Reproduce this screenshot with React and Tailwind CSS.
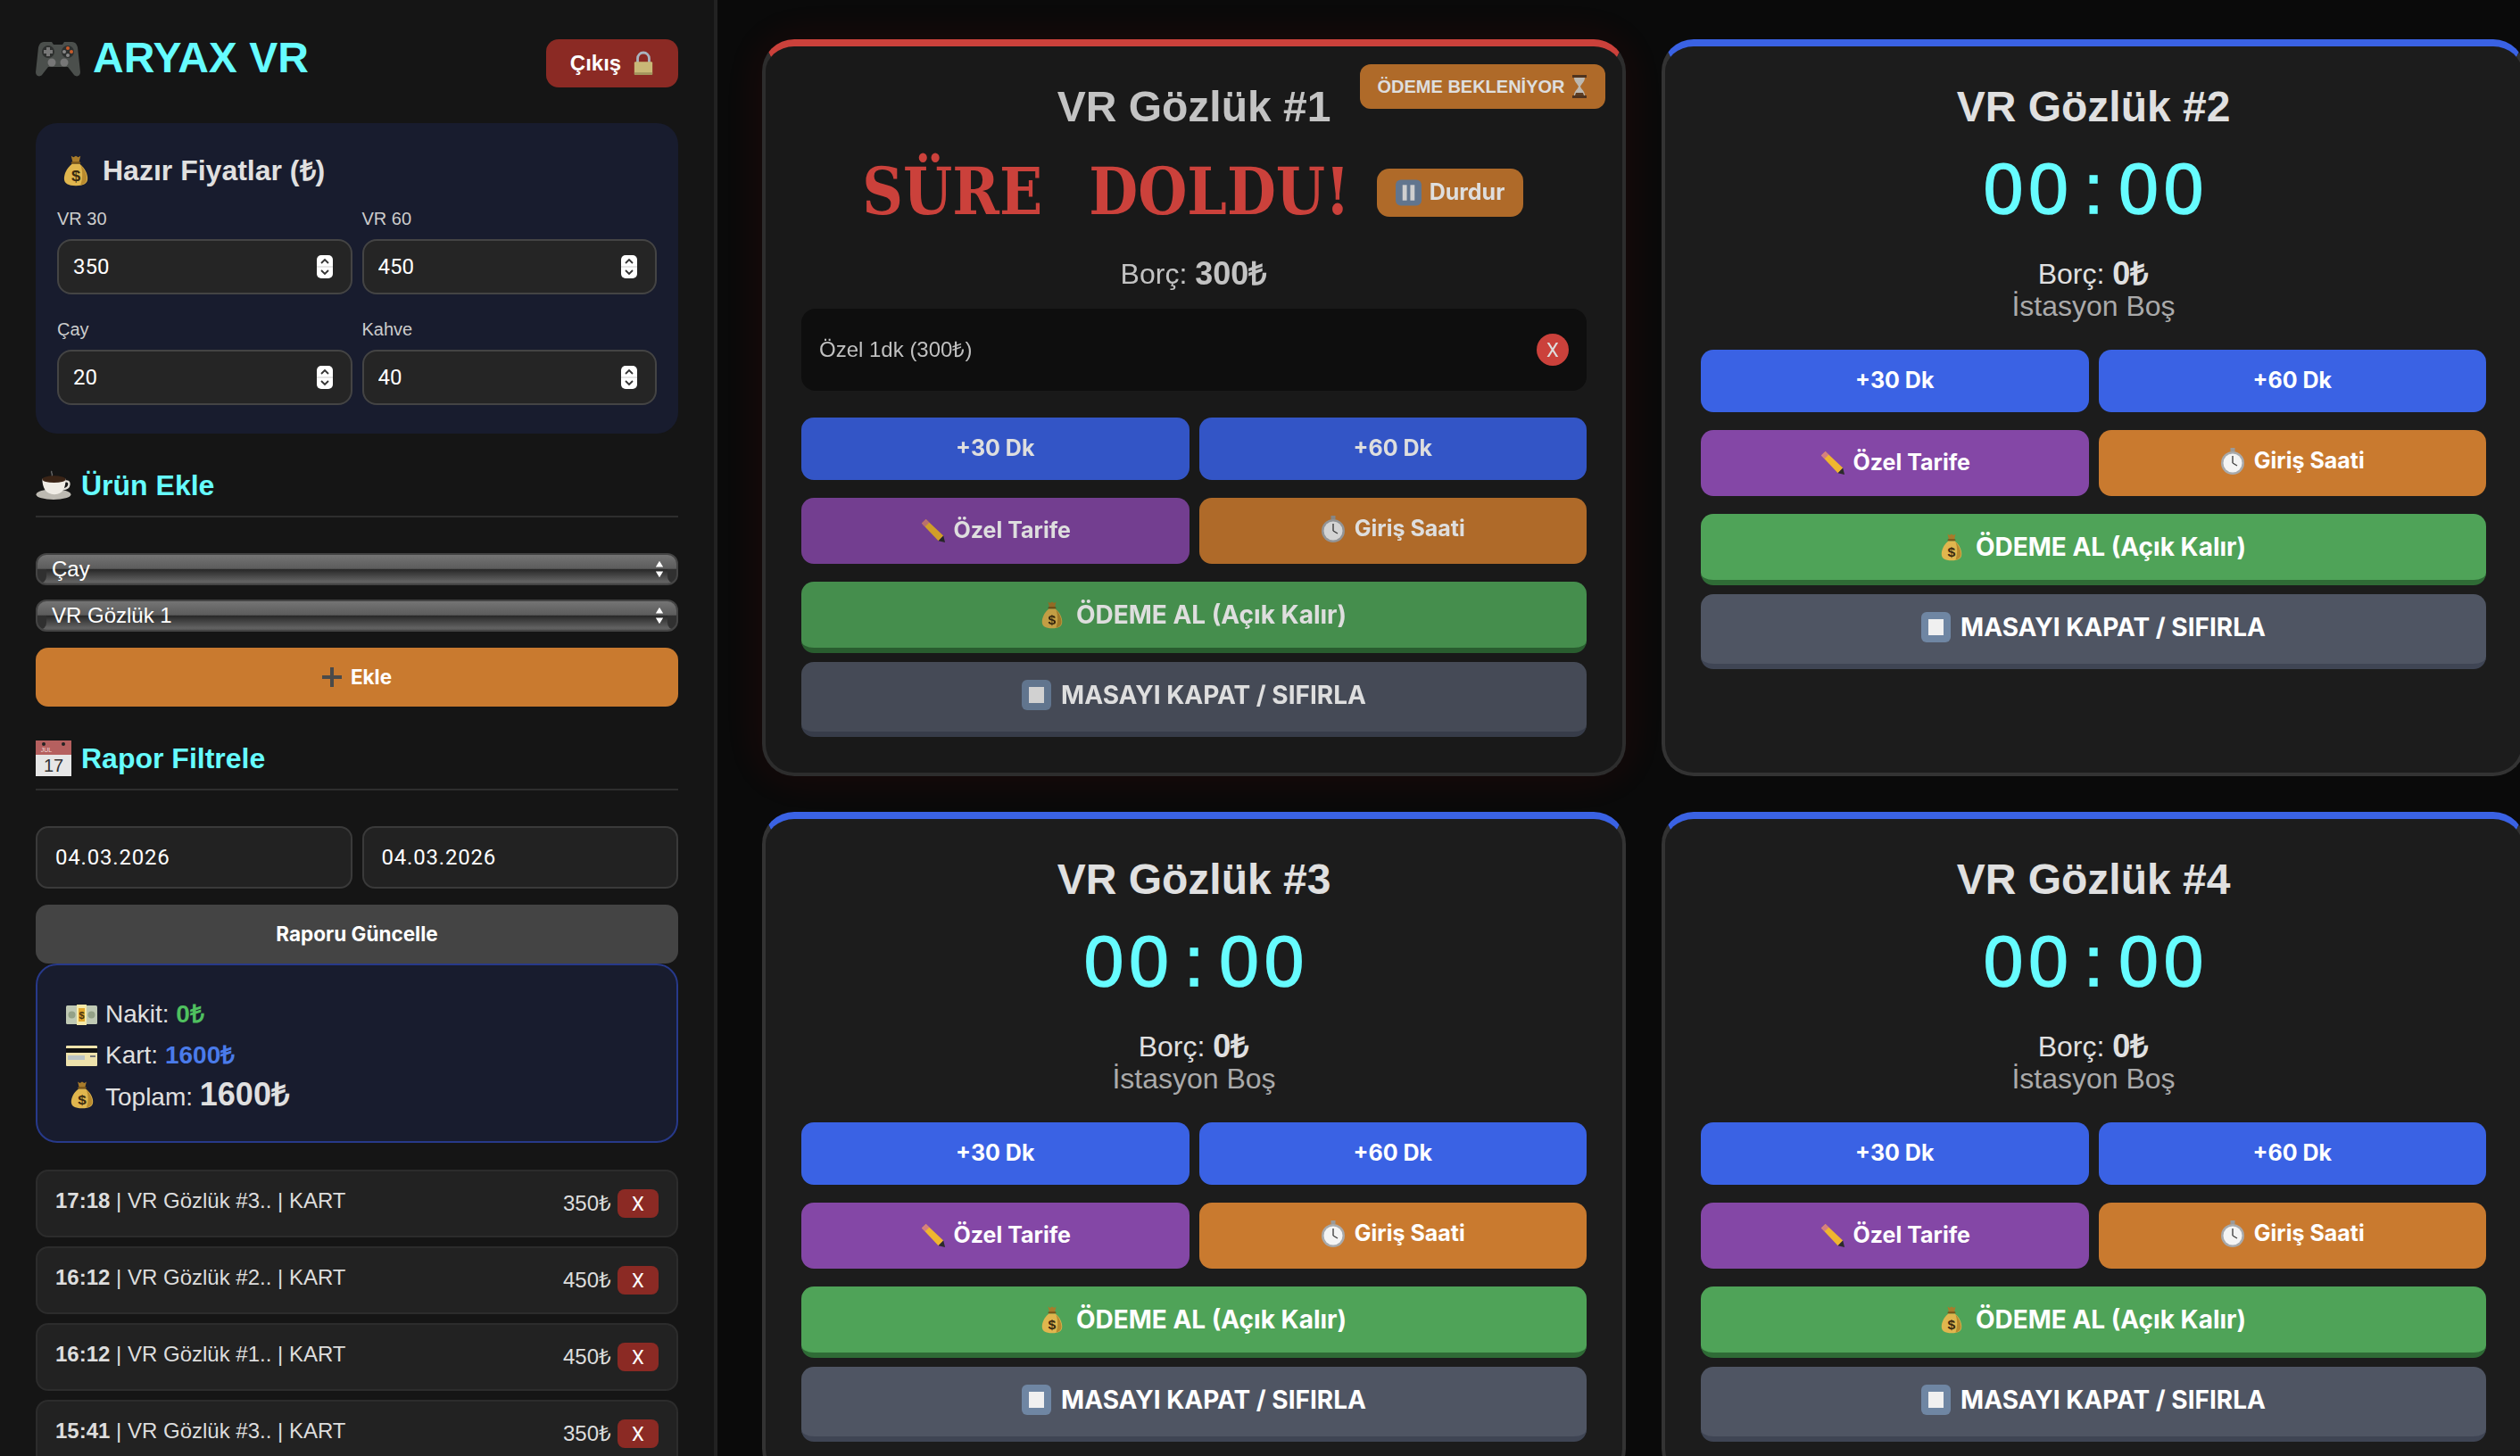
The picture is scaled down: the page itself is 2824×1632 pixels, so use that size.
import { useState } from "react";

const Bag = ({ className }) => (
  <svg viewBox="0 0 32 44" preserveAspectRatio="none" className={className}>
    <path d="M10 2l3 2 3-2 3 2 3-2-2 9h-8z" fill="#a87b2a" />
    <rect x="10" y="10" width="12" height="3" rx="1.5" fill="#7a5518" />
    <path d="M11 13C4 19 1 27 1 33c0 7 5 10 15 10s15-3 15-10c0-6-3-14-10-20z" fill="#e0b64e" />
    <path d="M22 14c5 6 8 13 8 19 0 5-3 8-8 9 3-9 3-19 0-28z" fill="#b88a2e" />
    <text x="16" y="37" textAnchor="middle" fontSize="21" fontWeight="700" fontFamily="Liberation Sans" fill="#3a2a10">$</text>
  </svg>
);

const Gamepad = ({ className }) => (
  <svg viewBox="0 0 50 44" className={className}>
    <path d="M9 4h9l2 3h10l2-3h9c3 0 5 2 6 6l3 28c0 4-4 6-7 3l-7-9H14l-7 9c-3 3-7 1-7-3l3-28c1-4 3-6 6-6z" fill="#4b4f4c" />
    <circle cx="14" cy="15" r="7" fill="#2e302f" />
    <path d="M12 10h4v3h3v4h-3v3h-4v-3H9v-4h3z" fill="#777" />
    <circle cx="36" cy="15" r="7" fill="#2e302f" />
    <circle cx="36" cy="11" r="2" fill="#c85a2a" />
    <circle cx="40" cy="15" r="2" fill="#c85a2a" />
    <circle cx="32" cy="15" r="2" fill="#888" />
    <circle cx="36" cy="19" r="2" fill="#888" />
    <circle cx="18" cy="27" r="4.5" fill="#777" />
    <circle cx="32" cy="27" r="4.5" fill="#777" />
  </svg>
);

const Lock = ({ className }) => (
  <svg viewBox="0 0 26 30" className={className}>
    <path d="M6 14V9a7 7 0 0114 0v5" fill="none" stroke="#a9b4c0" strokeWidth="3" />
    <rect x="2" y="13" width="22" height="16" rx="1.5" fill="#c9b877" />
    <rect x="2" y="26" width="22" height="3" fill="#a3945c" />
  </svg>
);

const Coffee = ({ className }) => (
  <svg viewBox="0 0 40 34" className={className}>
    <path d="M18 1c-2 2 2 3 0 6" fill="none" stroke="#666" strokeWidth="1.5" />
    <ellipse cx="20" cy="28" rx="20" ry="6" fill="#bdbab2" />
    <path d="M7 10h27c0 10-3 18-13 18S7 20 7 10z" fill="#efece5" />
    <path d="M33 13c7-2 7 8-2 9" fill="none" stroke="#e2dfd8" strokeWidth="2.5" />
    <ellipse cx="20.5" cy="10.5" rx="13.5" ry="4" fill="#3a2416" />
  </svg>
);

const Calendar = ({ className }) => (
  <svg viewBox="0 0 40 40" className={className}>
    <rect width="40" height="40" fill="#e6e6e6" />
    <rect width="40" height="16" fill="#b5605f" />
    <circle cx="9" cy="4" r="2" fill="#222" />
    <circle cx="31" cy="4" r="2" fill="#222" />
    <text x="12" y="13" textAnchor="middle" fontSize="7" fontFamily="Liberation Sans" fill="#f2dcdc">JUL</text>
    <text x="20" y="35" textAnchor="middle" fontSize="20" fontFamily="Liberation Sans" fill="#333">17</text>
  </svg>
);

const Cash = ({ className }) => (
  <svg viewBox="0 0 35 23" className={className}>
    <rect x="0" y="1" width="35" height="21" rx="1.5" fill="#bfc9b4" />
    <circle cx="6.5" cy="11.5" r="4" fill="#93a187" />
    <circle cx="28.5" cy="11.5" r="4" fill="#93a187" />
    <rect x="12" y="0" width="11" height="23" fill="#f5e9a8" />
    <rect x="14" y="4" width="7" height="15" fill="#e2a92e" />
    <text x="17.5" y="15.5" textAnchor="middle" fontSize="11" fontWeight="700" fontFamily="Liberation Sans" fill="#4a3510">$</text>
  </svg>
);

const CreditCard = ({ className }) => (
  <svg viewBox="0 0 35 23" className={className}>
    <rect width="35" height="23" rx="1" fill="#eee2ac" />
    <rect y="3" width="35" height="5" fill="#111" />
    <rect x="2" y="11" width="19" height="5" fill="#bcc5c4" />
    <rect x="27" y="11" width="6" height="2" fill="#777" />
  </svg>
);

const Pencil = ({ className }) => (
  <svg viewBox="0 0 30 30" className={className}>
    <path d="M1 6l5-5 21 20-6 6z" fill="#efb62f" />
    <path d="M1 6l5-5 4 4-5 5z" fill="#d57f7f" />
    <path d="M21 27l6-6 2 8z" fill="#2b2b2b" />
  </svg>
);

const Stopwatch = ({ className }) => (
  <svg viewBox="0 0 28 30" className={className}>
    <rect x="11.5" y="0" width="5" height="4" fill="#9a9a9a" />
    <circle cx="14" cy="17" r="13" fill="#a8aaac" />
    <circle cx="14" cy="17" r="10.5" fill="#f4f4f4" />
    <path d="M14 17V9M14 17l5 3" stroke="#444" strokeWidth="1.4" />
  </svg>
);

const Pause = ({ className }) => (
  <svg viewBox="0 0 30 30" className={className}>
    <rect width="30" height="30" rx="6" fill="#6f86a3" />
    <rect x="8" y="6" width="5" height="18" fill="#eee" />
    <rect x="17" y="6" width="5" height="18" fill="#eee" />
  </svg>
);

const Stop = ({ className }) => (
  <svg viewBox="0 0 33 34" className={className}>
    <rect width="33" height="34" rx="6" fill="#6f86a3" />
    <rect x="8" y="8" width="17" height="18" fill="#f0f0f0" />
  </svg>
);

const Hourglass = ({ className }) => (
  <svg viewBox="0 0 20 26" className={className}>
    <rect x="2" y="0" width="16" height="3" fill="#5a3a22" />
    <rect x="2" y="23" width="16" height="3" fill="#5a3a22" />
    <path d="M4 3h12c0 5-4 7-5 10 1 3 5 5 5 10H4c0-5 4-7 5-10-1-3-5-5-5-10z" fill="#d8d4cc" />
    <path d="M6 20h8l1 3H5z" fill="#6b4526" />
  </svg>
);

const Spinner = () => (
  <svg viewBox="0 0 18 26" className="w-[18px] h-[26px] shrink-0">
    <rect width="18" height="26" rx="5" fill="#fff" />
    <path d="M5 9l4-4 4 4M5 17l4 4 4-4" fill="none" stroke="#333" strokeWidth="1.8" />
    <path d="M0 13h18" stroke="#ccc" />
  </svg>
);

const SelectArrows = () => (
  <svg viewBox="0 0 12 24" className="w-[10px] h-[20px] shrink-0">
    <path d="M6 1l5 8H1zM6 23l-5-8h10z" fill="#fff" />
  </svg>
);

function PriceField({ label, value }) {
  return (
    <div>
      <div className="h-[26px] mb-[10px] text-[20px] leading-[26px] text-[#ccc]">{label}</div>
      <div className="h-[62px] flex items-center pl-[16px] pr-[20px] bg-[#252525] border-2 border-[#444] rounded-[16px]">
        <input
          type="number"
          defaultValue={value}
          className="flex-1 min-w-0 bg-transparent outline-none text-white text-[24px] font-['Roboto'] [appearance:textfield] [&::-webkit-inner-spin-button]:appearance-none"
        />
        <Spinner />
      </div>
    </div>
  );
}

function GlossySelect({ value, options }) {
  return (
    <div className="relative h-[36px] rounded-[12px] border-2 border-[#444] overflow-hidden bg-[linear-gradient(#747474,#5c5c5c_48%,#272727_50%,#636363_94%,#555_100%)]">
      <div className="absolute left-0 bottom-0 w-[10px] h-[16px] bg-[#303030] rounded-br-[8px]" />
      <div className="absolute right-0 bottom-0 w-[10px] h-[16px] bg-[#303030] rounded-bl-[8px]" />
      <select
        defaultValue={value}
        className="relative w-full h-full pl-[16px] pr-[30px] bg-transparent appearance-none outline-none text-white text-[24px] leading-[32px] font-['Liberation_Sans']"
      >
        {options.map((o) => (
          <option key={o}>{o}</option>
        ))}
      </select>
      <div className="absolute right-[14px] top-[6px]">
        <SelectArrows />
      </div>
    </div>
  );
}

function SectionTitle({ icon, children }) {
  return (
    <div className="flex items-center gap-[11px] mt-[37px] pb-[14px] border-b-2 border-[#2e2e2e]">
      {icon}
      <h3 className="pt-[2px] text-[32px] leading-[39px] font-bold text-[#66fcff]">{children}</h3>
    </div>
  );
}

function LogRow({ time, name, price }) {
  return (
    <div className="h-[76px] shrink-0 flex items-center justify-between pl-[20px] pr-[20px] bg-[#222] border-2 border-[#2c2c2c] rounded-[14px] text-[24px] text-[#ddd]">
      <div className="-mt-[6px]">
        <b>{time}</b> | {name}.. | KART
      </div>
      <div className="flex items-center gap-[7px]">
        <span>{price}₺</span>
        <button className="w-[46px] h-[32px] bg-[#8b2a24] rounded-[8px] text-white text-[22px] font-['Roboto']">X</button>
      </div>
    </div>
  );
}

function Sidebar() {
  return (
    <aside className="w-[804px] shrink-0 h-full overflow-hidden pt-[44px] pl-[40px] pr-[40px] bg-[#151515] border-r-4 border-[#222]">
      <header className="h-[54px] flex items-start justify-between">
        <div className="flex items-center gap-[14px] h-[44px] mt-[-1px]">
          <Gamepad className="w-[50px] h-[44px]" />
          <h1 className="text-[48px] font-bold text-[#66fcff] leading-[42px]">ARYAX VR</h1>
        </div>
        <button className="w-[148px] h-[54px] flex items-center justify-center gap-[13px] bg-[#8b2a24] rounded-[14px] text-white text-[24px] font-bold">
          Çıkış <Lock className="w-[24px] h-[28px]" />
        </button>
      </header>

      <section className="mt-[40px] h-[348px] pt-[34px] px-[24px] bg-[#181c2e] rounded-[24px]">
        <div className="h-[37px] mb-[23px] flex items-center gap-[16px] pl-[7px] text-[32px] font-bold text-[#e0e0e0]">
          <Bag className="w-[28px] h-[36px]" />
          Hazır Fiyatlar (₺)
        </div>
        <div className="grid grid-cols-2 gap-x-[11px] gap-y-[26px]">
          <PriceField label="VR 30" value={350} />
          <PriceField label="VR 60" value={450} />
          <PriceField label="Çay" value={20} />
          <PriceField label="Kahve" value={40} />
        </div>
      </section>

      <SectionTitle icon={<Coffee className="w-[40px] h-[33px]" />}>Ürün Ekle</SectionTitle>
      <div className="mt-[40px] flex flex-col gap-[16px]">
        <GlossySelect value="Çay" options={["Çay", "Kahve"]} />
        <GlossySelect value="VR Gözlük 1" options={["VR Gözlük 1", "VR Gözlük 2", "VR Gözlük 3", "VR Gözlük 4"]} />
      </div>
      <button className="mt-[18px] w-full h-[66px] flex items-center justify-center gap-[10px] bg-[#c97a2f] rounded-[14px] text-white text-[22.5px] font-bold font-['Inter']">
        <svg viewBox="0 0 22 22" className="w-[22px] h-[22px]">
          <path d="M9 0h4v9h9v4h-9v9H9v-9H0V9h9z" fill="#4a4a4a" />
        </svg>
        Ekle
      </button>

      <SectionTitle icon={<Calendar className="w-[40px] h-[40px]" />}>Rapor Filtrele</SectionTitle>
      <div className="mt-[40px] grid grid-cols-2 gap-[11px]">
        {[0, 1].map((i) => (
          <div key={i} className="h-[70px] flex items-center pl-[20px] bg-[#222] border-2 border-[#3a3a3a] rounded-[14px] text-[24px] font-['Roboto'] tracking-[0.8px] text-white">
            04.03.2026
          </div>
        ))}
      </div>
      <button className="mt-[18px] w-full h-[66px] bg-[#444] rounded-[14px] text-white text-[22.5px] font-bold font-['Inter']">
        Raporu Güncelle
      </button>

      <section className="h-[201px] pt-[32px] pl-[32px] border-2 border-[#27398a] rounded-[24px] bg-[#181c2e] text-[28px] text-[#e0e0e0]">
        <div className="h-[46px] flex items-center gap-[9px]">
          <Cash className="w-[35px] h-[23px]" />
          <span>
            Nakit: <b className="text-[#4fc05f]">0₺</b>
          </span>
        </div>
        <div className="h-[46px] flex items-center gap-[9px]">
          <CreditCard className="w-[35px] h-[23px]" />
          <span>
            Kart: <b className="text-[#4a7bea]">1600₺</b>
          </span>
        </div>
        <div className="h-[42px] flex items-center gap-[9px]">
          <div className="w-[35px] flex justify-center">
            <Bag className="w-[26px] h-[32px]" />
          </div>
          <span>
            Toplam: <b className="text-[36px]">1600₺</b>
          </span>
        </div>
      </section>

      <div className="mt-[30px] flex flex-col gap-[10px]">
        <LogRow time="17:18" name="VR Gözlük #3" price={350} />
        <LogRow time="16:12" name="VR Gözlük #2" price={450} />
        <LogRow time="16:12" name="VR Gözlük #1" price={450} />
        <LogRow time="15:41" name="VR Gözlük #3" price={350} />
      </div>
    </aside>
  );
}

function Card({ title, expired }) {
  return (
    <div
      className={
        expired
          ? "relative pt-[40px] pb-[40px] px-[40px] bg-[#1c1c1c] border-4 border-t-8 border-[#333] border-t-[#ea4a43] rounded-[36px] opacity-[0.87] shadow-[0_0_50px_rgba(200,30,20,0.13)]"
          : "relative pt-[40px] pb-[40px] px-[40px] bg-[#1c1c1c] border-4 border-t-8 border-[#333] border-t-[#3a62e4] rounded-[36px]"
      }
    >
      {expired && (
        <div className="absolute top-[20px] right-[19px] w-[275px] h-[50px] flex items-center justify-center gap-[6px] bg-[#c97a2f] rounded-[12px] text-[20px] font-bold text-white">
          ÖDEME BEKLENİYOR <Hourglass className="w-[20px] h-[26px]" />
        </div>
      )}
      <h2 className="text-[48px] leading-[55px] font-bold text-center text-[#e0e0e0]">{title}</h2>

      {expired ? (
        <div className="mt-[19px] h-[92px] pl-[4px] flex items-center justify-center gap-[36px]">
          <div className="w-[534px] mt-[6px] flex justify-center whitespace-nowrap">
            <span className="block shrink-0 scale-x-[0.88] text-[72px] leading-[92px] font-bold font-['DejaVu_Serif'] [word-spacing:34px] text-[#ea4a43]">
              SÜRE DOLDU!
            </span>
          </div>
          <button className="w-[164px] h-[54px] mt-[8px] flex items-center justify-center gap-[9px] bg-[#c97a2f] rounded-[14px] text-white text-[25px] font-bold font-['Inter']">
            <Pause className="w-[29px] h-[30px]" />
            Durdur
          </button>
        </div>
      ) : (
        <div className="mt-[19px] h-[92px] flex items-center justify-center text-[80px] leading-[92px] text-[#66fcff] [-webkit-text-stroke:1.5px_#66fcff]">
          <span className="w-[50.5px] text-center">0</span>
          <span className="w-[50.5px] text-center">0</span>
          <span className="w-[50.5px] text-center">:</span>
          <span className="w-[50.5px] text-center">0</span>
          <span className="w-[50.5px] text-center">0</span>
        </div>
      )}

      <div className="mt-[31px] h-[36px] flex items-center justify-center gap-[9px] text-[32px] text-[#e0e0e0]">
        <span>Borç:</span>
        <b className="text-[36px]">{expired ? "300₺" : "0₺"}</b>
      </div>

      {expired ? (
        <div className="mt-[21px] mb-[30px] h-[92px] flex items-center justify-between px-[20px] bg-[#0f0f0f] rounded-[16px] text-[24px] text-[#ddd]">
          <span>Özel 1dk (300₺)</span>
          <button className="w-[36px] h-[36px] rounded-full bg-[#ea4a43] text-white text-[22px] font-['Roboto']">X</button>
        </div>
      ) : (
        <div className="mb-[31px] text-center text-[32px] leading-[36px] text-[#aaa]">İstasyon Boş</div>
      )}

      <div className="font-['Inter'] font-bold text-white">
        <div className="grid grid-cols-2 gap-[11px] text-[25px]">
          <button className="h-[70px] bg-[#3a62e4] rounded-[14px]">+30 Dk</button>
          <button className="h-[70px] bg-[#3a62e4] rounded-[14px]">+60 Dk</button>
          <button className="mt-[9px] h-[74px] flex items-center justify-center gap-[8px] bg-[#8447a6] rounded-[14px]">
            <Pencil className="w-[30px] h-[28px]" />
            Özel Tarife
          </button>
          <button className="mt-[9px] h-[74px] pb-[4px] flex items-center justify-center gap-[10px] bg-[#c97a2f] rounded-[14px]">
            <Stopwatch className="w-[28px] h-[30px]" />
            Giriş Saati
          </button>
        </div>
        <button className="mt-[20px] w-full h-[80px] flex items-center justify-center gap-[15px] bg-[#4fa358] border-b-[6px] border-[#2f6b36] rounded-[14px] text-[28px]">
          <Bag className="w-[24px] h-[32px]" />
          ÖDEME AL (Açık Kalır)
        </button>
        <button className="mt-[10px] w-full h-[84px] pb-[4px] flex items-center justify-center gap-[11px] bg-[#4f5563] border-b-[6px] border-[#3f4554] rounded-[14px] text-[28px]">
          <Stop className="w-[33px] h-[34px]" />
          MASAYI KAPAT / SIFIRLA
        </button>
      </div>
    </div>
  );
}

export default function App() {
  const [stations] = useState(["VR Gözlük #1", "VR Gözlük #2", "VR Gözlük #3", "VR Gözlük #4"]);

  return (
    <div className="h-[1632px] w-[2824px] flex overflow-hidden bg-[#0a0a0a] font-['Liberation_Sans',sans-serif]">
      <Sidebar />
      <main className="pl-[50px] pt-[44px]">
        <div className="grid grid-cols-[968px_968px] gap-[40px]">
          {stations.map((s, i) => (
            <Card key={s} title={s} expired={i === 0} />
          ))}
        </div>
      </main>
    </div>
  );
}
